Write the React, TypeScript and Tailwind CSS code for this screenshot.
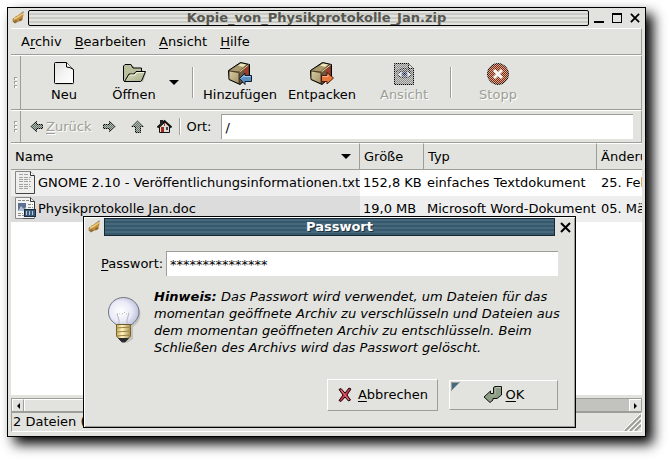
import React from "react";

type IconProps = { className?: string };

function SharedPaints() {
  return (
    <svg className="absolute size-0" aria-hidden="true">
      <defs>
        <pattern id="dither" width="2" height="2" patternUnits="userSpaceOnUse">
          <rect width="1" height="1" fill="#e2e3de" />
          <rect x="1" y="1" width="1" height="1" fill="#e2e3de" />
        </pattern>
        <linearGradient id="paper" x1="0" y1="0" x2="1" y2="1">
          <stop offset="0" stopColor="#dfe0de" />
          <stop offset="0.5" stopColor="#f4f4f3" />
          <stop offset="1" stopColor="#ffffff" />
        </linearGradient>
        <linearGradient id="folder" x1="0" y1="0" x2="1" y2="1">
          <stop offset="0" stopColor="#dfe3c6" />
          <stop offset="1" stopColor="#a3aa84" />
        </linearGradient>
        <linearGradient id="boxFront" x1="0" y1="0" x2="1" y2="1">
          <stop offset="0" stopColor="#d6cba0" />
          <stop offset="1" stopColor="#a3936a" />
        </linearGradient>
        <radialGradient id="glass" cx="0.4" cy="0.5" r="0.6">
          <stop offset="0" stopColor="#ffffff" />
          <stop offset="0.6" stopColor="#e9eaf6" />
          <stop offset="1" stopColor="#bcc0dc" />
        </radialGradient>
        <linearGradient id="brass" x1="0" y1="0" x2="1" y2="0">
          <stop offset="0" stopColor="#c9ad5c" />
          <stop offset="0.4" stopColor="#fff6c4" />
          <stop offset="1" stopColor="#a8924b" />
        </linearGradient>
      </defs>
    </svg>
  );
}

function RollerIcon({ className }: IconProps) {
  return (
    <svg viewBox="0 0 14 14" className={className} aria-hidden="true">
      <path d="M2 8L5 5L7 4.500L9 2.500L12 1.500L12.500 4L11.500 8L8 10.500L4 11.500L1.500 11Z" fill="#c08d3c" />
      <path d="M3 8L7 6L10 4L12 2.500" stroke="#eccb82" strokeWidth="1.500" fill="none" />
      <path d="M2 10.500L5 9L7 10.500L4 12.500Z" fill="#8d7040" />
      <path d="M8 8.500L11 7L11.500 9L8.500 10.500Z" fill="#94642a" />
      <path d="M1.500 8.500L3 7.500M10.500 1.500L13 1" stroke="#808287" />
    </svg>
  );
}

function NewIcon({ className }: IconProps) {
  return (
    <svg viewBox="0 0 24 24" className={className} aria-hidden="true">
      <path d="M3.500 1.500H15.500L22 8V22.500H3.500Z" fill="#b9bab6" />
      <path d="M2.500 1.500Q2.500 .5 3.500 .5H14.500L21.500 7.500V20.500Q21.500 21.500 20.500 21.500H3.500Q2.500 21.500 2.500 20.500Z" fill="url(#paper)" stroke="#000" />
      <path d="M14.500 .5V5Q18 5 21.500 7.500" fill="#fff" stroke="#000" />
    </svg>
  );
}

function FolderIcon({ className }: IconProps) {
  return (
    <svg viewBox="0 0 24 24" className={className} aria-hidden="true">
      <path d="M2 4h10v4h9v3h3l-3 9H3z" fill="#babbb6" />
      <path d="M1.500 18V4L3 2.500H9L11 6H19.500V9.500" fill="#b9bf9d" stroke="#000" />
      <path d="M2.500 19.500L7 12H12L14 9.500H23.500L20 18L18.500 19.500Z" fill="url(#folder)" stroke="#000" />
      <path d="M8 13h5l2-2.500h7" stroke="#f1f3df" fill="none" />
      <path d="M1.500 17V18.500L3 19.500" stroke="#000" fill="none" />
    </svg>
  );
}

function BoxBody() {
  return (
    <>
      <path d="M.5 8.500L12.500 .5L21.500 2.500V14L12 22.500L1 17.500Z" fill="#4d3d26" stroke="#000" />
      <path d="M1.500 8.500L12.500 1.500L19 2.500L11 9.500Z" fill="#a89a6c" />
      <path d="M10 3.500L13 1.500L18 2.500L15 5Z" fill="#efe5bb" />
      <path d="M1.500 9.500L10.500 11V21L1.500 17Z" fill="url(#boxFront)" />
      <path d="M12 10.500L20.500 3.500V14L12 21Z" fill="#9d3d2a" />
      <path d="M12 10.500L16 7.500V17L12 21Z" fill="#69583b" />
      <path d="M11.500 10L20.500 3" stroke="#ecdcae" />
    </>
  );
}

function AddIcon({ className }: IconProps) {
  return (
    <svg viewBox="0 0 24 24" className={className} aria-hidden="true">
      <BoxBody />
      <path d="M11.500 16.500L17 11V13.500H23.500V19.500H17V22.500Z" fill="#5b8fc0" stroke="#0b1b33" />
      <path d="M13 16.500L16 13.500V14.500H22.500" stroke="#a9cae6" fill="none" />
    </svg>
  );
}

function ExtractIcon({ className }: IconProps) {
  return (
    <svg viewBox="0 0 24 24" className={className} aria-hidden="true">
      <BoxBody />
      <path d="M11.500 13.500H17V10.500L23.500 16L17 22V19.500H11.500Z" fill="#e8783c" stroke="#47180a" />
      <path d="M12.500 14.500H18V12.500" stroke="#f8b58d" fill="none" />
    </svg>
  );
}

function ViewIcon({ className }: IconProps) {
  return (
    <svg viewBox="0 0 24 24" className={className} aria-hidden="true">
      <path d="M2.500 1.500H16.500L21.500 6.500V22.500H2.500Z" fill="#8d8e8b" stroke="#000" />
      <path d="M16.500 1.500V6.500H21.500" fill="#ddd" stroke="#000" />
      <path d="M4.500 12.500Q12 5 20.500 12.500Q12 19 4.500 12.500Z" fill="#e8e8ec" stroke="#222" />
      <path d="M4 10Q12 3 20 10" stroke="#222" fill="none" />
      <circle cx="12.500" cy="12" r="3" fill="#44547c" />
      <circle cx="12.500" cy="12" r="1" fill="#000" />
      <rect width="24" height="24" fill="url(#dither)" opacity="0.75" shapeRendering="crispEdges" />
    </svg>
  );
}

function StopIcon({ className }: IconProps) {
  return (
    <svg viewBox="0 0 24 24" className={className} aria-hidden="true">
      <circle cx="12" cy="12" r="10.500" fill="#8c2706" stroke="#000" />
      <rect width="24" height="24" fill="url(#dither)" opacity="0.7" shapeRendering="crispEdges" />
      <path d="M8 8L16 16M16 8L8 16" stroke="#f4f4f2" strokeWidth="3" />
    </svg>
  );
}

function ArrowIcon({ className, d }: IconProps & { d: string }) {
  return (
    <svg viewBox="0 0 15 15" className={className} aria-hidden="true">
      <path d={d} fill="#5f7364" stroke="#000" />
      <rect width="15" height="15" fill="url(#dither)" opacity="0.65" shapeRendering="crispEdges" />
    </svg>
  );
}

function HomeIcon({ className }: IconProps) {
  return (
    <svg viewBox="0 0 15 15" className={className} aria-hidden="true">
      <path d="M2.500 8V13.500H12.500V7L8 3Z" fill="#dcdcd6" stroke="#111" />
      <path d="M.5 8.500L7.500 2L14.500 8.500" stroke="#111" strokeWidth="2" fill="none" />
      <path d="M3 1h3v4l-3 3z" fill="#222" />
      <rect x="4" y="8" width="3" height="5" fill="#a52a1c" />
      <rect x="9" y="8" width="2" height="3" fill="#3f4a58" />
      <path d="M7.500 4V7" stroke="#b03a26" />
    </svg>
  );
}

function TextFileIcon({ className }: IconProps) {
  return (
    <svg viewBox="0 0 24 24" className={className} aria-hidden="true">
      <path d="M2.500 .5H17.500L21.500 4.500V22.500H2.500Z" fill="#efefee" stroke="#858585" />
      <path d="M21.500 5V22.500H3" stroke="#444" fill="none" />
      <path d="M17.500 .5V4.500H21.500" fill="#fff" stroke="#333" />
      <path d="M6 3.500h9M6 6.500h12M6 8.500h11M6 10.500h12M6 13.500h11M6 15.500h12M6 17.500h10" stroke="#a3a4a2" strokeDasharray="4 1" />
    </svg>
  );
}

function DocFileIcon({ className }: IconProps) {
  return (
    <svg viewBox="0 0 24 24" className={className} aria-hidden="true">
      <path d="M2.500 .5H17.500L21.500 4.500V21.500H2.500Z" fill="#f3f3f3" stroke="#888" />
      <path d="M17.500 .5V4.500H21.500V12" fill="#fff" stroke="#333" />
      <path d="M5 3.500h11M15 7.500h5M15 10.500h5M5 16.500h5M5 18.500h6" stroke="#888" strokeDasharray="3 1" />
      <rect x="5" y="6" width="8" height="8" fill="#5e6f94" />
      <path d="M5 14l3-5 3 3 2-2v4z" fill="#b3bfd0" />
      <rect x="11.500" y="12.500" width="11" height="7" fill="#3c5b7c" stroke="#182a3d" />
      <path d="M13.500 14v4M16.500 14v4M19.500 14v4" stroke="#b7c8da" />
      <path d="M10 21.500h11" stroke="#555" />
    </svg>
  );
}

function BulbIcon({ className }: IconProps) {
  return (
    <svg viewBox="0 0 36 48" className={className} aria-hidden="true">
      <path d="M18 3C27 3 34.500 10 34.500 18C34.500 24 31 28 27 31V43L21 47L14 43V30C8 27 5 23 5 18" fill="#c3c4c0" />
      <path d="M17.500 1.500C26 1.500 33 8 33 16C33 22 29 26 25 29H11C6 26 2.500 22 2.500 16C2.500 8 9 1.500 17.500 1.500Z" fill="url(#glass)" stroke="#707381" />
      <path d="M13 28V24L11 18L14 17L16 18L18 16L20 18L23 17L21 24V28" stroke="#b5b8c0" fill="none" />
      <path d="M12 18l2-2 1 2 2-2 2 2 2-2 1 2" stroke="#fff" fill="none" />
      <path d="M10.500 28.500H24.500V40L20 45H15L10.500 40Z" fill="url(#brass)" stroke="#6c5b2b" />
      <path d="M10 32L25 31M10 36L25 35M10 40L25 39" stroke="#9a8040" />
      <path d="M12 42H23L19 46.500H16Z" fill="#292a2d" />
    </svg>
  );
}

function CancelIcon({ className }: IconProps) {
  return (
    <svg viewBox="0 0 16 16" className={className} aria-hidden="true">
      <path d="M2 2.500L4 1.500L8 6L12 1L14 2L10 8L13.500 13L11.500 14L8 10L4 14.500L2 13.500L6 8Z" fill="#c43648" stroke="#1d0508" />
      <path d="M4 3L12 13" stroke="#e27684" />
    </svg>
  );
}

function OkIcon({ className }: IconProps) {
  return (
    <svg viewBox="0 0 20 20" className={className} aria-hidden="true">
      <path d="M10.500 2.500L12 1.500H18.500V10L14 13.500H10V15L7 17.500L1 12L7.500 6V8.500H10.500Z" fill="#8d9d85" stroke="#111" />
      <path d="M12.500 3V9.500L10 11H7.500" stroke="#a4b19b" fill="none" />
      <path d="M13 2.500h5" stroke="#bcc7b4" />
    </svg>
  );
}

function CloseIcon({ className }: IconProps) {
  return (
    <svg viewBox="0 0 11 11" className={className} aria-hidden="true">
      <path d="M1 1L10 10M10 1L1 10" stroke="#000" strokeWidth="2" />
    </svg>
  );
}

function Grip() {
  return (
    <div className="flex w-[10px] shrink-0 flex-col items-center justify-center gap-[1px] self-stretch border-r border-[#9d9e97]">
      <i className="size-[3px] border-t border-l border-[#9d9e97] bg-white" />
      <i className="size-[3px] border-t border-l border-[#9d9e97] bg-white" />
      <i className="size-[3px] border-t border-l border-[#9d9e97] bg-white" />
    </div>
  );
}

function Separator({ className }: IconProps) {
  return <div className={`w-[2px] shrink-0 border-l border-[#9d9e97] bg-white ${className}`} />;
}

type ToolProps = { label: string; icon: React.ReactNode; width: string; disabled?: boolean };

function Tool({ label, icon, width, disabled }: ToolProps) {
  return (
    <button
      disabled={disabled}
      className={`flex shrink-0 flex-col items-center gap-[1px] ${width} disabled:text-[#9d9e97] disabled:[text-shadow:1px_1px_0_#fff]`}
    >
      {icon}
      {label}
    </button>
  );
}

const menus = [
  ["A", "r", "chiv"],
  ["", "B", "earbeiten"],
  ["", "A", "nsicht"],
  ["", "H", "ilfe"],
];

const files = [
  {
    name: "GNOME 2.10 - Veröffentlichungsinformationen.txt",
    icon: <TextFileIcon className="size-6 shrink-0" />,
    size: "152,8 KB",
    type: "einfaches Textdokument",
    date: "25. Feb",
    row: "bg-white",
    first: "bg-[#eeeeee]",
  },
  {
    name: "Physikprotokolle Jan.doc",
    icon: <DocFileIcon className="size-6 shrink-0" />,
    size: "19,0 MB",
    type: "Microsoft Word-Dokument",
    date: "05. Mä",
    row: "bg-[#eeeeee]",
    first: "bg-[#dcdcdc]",
  },
];

const headCell = "border-t border-r border-b border-t-white border-r-[#9d9e97] border-b-[#9d9e97] px-1 text-left font-normal";

function PasswordDialog() {
  return (
    <section
      role="dialog"
      aria-labelledby="dialog-title"
      className="absolute top-[208px] right-[69px] left-[75px] border border-black bg-[#e2e3de] pb-4 shadow-[inset_1px_1px_0_#fff,inset_-1px_-1px_0_#9d9e97]"
    >
      <header className="flex h-5 items-center gap-[3px] px-[3px]">
        <RollerIcon className="size-[14px] shrink-0" />
        <h2
          id="dialog-title"
          className="h-[18px] flex-1 border border-[#152a35] bg-[repeating-linear-gradient(#47697d_0_2px,#38596c_2px_4px)] pl-5 text-center leading-4 font-bold text-white [text-shadow:1px_1px_0_#1c323e]"
        >
          Passwort
        </h2>
        <button aria-label="Schließen" className="flex w-[14px] shrink-0 justify-center">
          <CloseIcon className="size-[11px]" />
        </button>
      </header>
      <div className="mt-[14px] flex items-center gap-1 px-[17px]">
        <label htmlFor="password" className="w-[61px] whitespace-nowrap">
          <u>P</u>asswort:
        </label>
        <input
          id="password"
          defaultValue="***************"
          className="h-[25px] min-w-0 flex-1 border-t border-l border-[#9d9e97] bg-white px-[3px] outline-none"
        />
      </div>
      <div className="mt-3 flex gap-3 pr-2 pl-[22px]">
        <BulbIcon className="mt-2 h-12 w-9 shrink-0" />
        <p className="leading-[17px] italic">
          <strong>Hinweis:</strong> Das Passwort wird verwendet, um Dateien für das momentan geöffnete Archiv zu
          verschlüsseln und Dateien aus dem momentan geöffneten Archiv zu entschlüsseln. Beim Schließen des Archivs
          wird das Passwort gelöscht.
        </p>
      </div>
      <footer className="mt-[23px] flex items-center justify-end gap-[11px] pr-[17px]">
        <button className="flex h-8 w-[111px] items-center justify-center gap-[5px] border border-t-white border-r-[#9d9e97] border-b-[#9d9e97] border-l-white">
          <CancelIcon className="size-4" />
          <span>
            <u>A</u>bbrechen
          </span>
        </button>
        <button className="relative flex h-[30px] w-[109px] items-center justify-center gap-[3px] border border-t-white border-r-[#9d9e97] border-b-[#9d9e97] border-l-white">
          <svg viewBox="0 0 9 9" className="absolute top-[1px] left-[1px] size-[9px]" aria-hidden="true">
            <path d="M0 0H9L0 9Z" fill="#47697d" />
            <path d="M0 .5H9M.5 0V9" stroke="#9d9e97" />
          </svg>
          <OkIcon className="size-5" />
          <span>
            <u>O</u>K
          </span>
        </button>
      </footer>
    </section>
  );
}

export default function App() {
  return (
    <main className="flex min-h-screen bg-white pt-[7px] pr-[23px] pb-[23px] pl-[7px] font-['DejaVu_Sans',sans-serif] text-[13px] leading-4 text-black [&_u]:underline-offset-2">
      <SharedPaints />
      <div className="relative flex min-w-0 flex-1 flex-col border border-black bg-[#e2e3de] px-[3px] pb-1 shadow-[7px_7px_12px_#000]">
        <header className="flex h-5 shrink-0 items-center">
          <RollerIcon className="size-[14px] shrink-0" />
          <h1 className="ml-[3px] h-4 min-w-0 flex-1 overflow-hidden rounded-[2px] border border-black bg-[repeating-linear-gradient(#e2e3de_0_2px,#c9cac5_2px_4px)] pl-4 text-center leading-[14px] font-bold text-[#555650]">
            Kopie_von_Physikprotokolle_Jan.zip
          </h1>
          <div className="flex shrink-0 items-center gap-2 pr-[2px] pl-[5px]">
            <button aria-label="Minimieren" className="flex h-[10px] w-[10px] items-end">
              <i className="h-[2px] w-full bg-black" />
            </button>
            <button aria-label="Maximieren" className="h-[10px] w-[10px] border border-t-2 border-black" />
            <button aria-label="Fenster schließen">
              <CloseIcon className="size-[10px]" />
            </button>
          </div>
        </header>

        <nav className="flex h-[27px] shrink-0 items-center gap-[13px] border-t border-r border-b border-t-white border-r-[#9d9e97] border-b-[#9d9e97] pl-[10px]">
          {menus.map(([before, key, after]) => (
            <button key={after}>
              {before}
              <u>{key}</u>
              {after}
            </button>
          ))}
        </nav>

        <div className="flex h-[55px] shrink-0 items-center border-t border-r border-b border-t-white border-r-[#9d9e97] border-b-[#9d9e97]">
          <Grip />
          <div className="flex items-center pl-2">
            <Tool label="Neu" width="w-[70px]" icon={<NewIcon className="size-6" />} />
            <Tool label="Öffnen" width="w-[70px]" icon={<FolderIcon className="size-6" />} />
            <button aria-label="Zuletzt geöffnet" className="flex w-[10px] justify-center">
              <i className="border-x-[5px] border-t-[5px] border-x-transparent border-t-black" />
            </button>
            <Separator className="mr-[5px] ml-[13px] h-[31px]" />
            <Tool label="Hinzufügen" width="w-[82px]" icon={<AddIcon className="size-6" />} />
            <Tool label="Entpacken" width="w-[82px]" icon={<ExtractIcon className="size-6" />} />
            <Tool label="Ansicht" width="w-[82px]" icon={<ViewIcon className="size-6" />} disabled />
            <Separator className="mr-[5px] ml-[5px] h-[31px]" />
            <Tool label="Stopp" width="w-[82px]" icon={<StopIcon className="size-6" />} disabled />
          </div>
        </div>

        <div className="flex h-[33px] shrink-0 items-center border-t border-r border-b border-t-white border-r-[#9d9e97] border-b-[#9d9e97] pr-2">
          <Grip />
          <button disabled className="ml-2 flex items-center gap-[2px] text-[#9d9e97] [text-shadow:1px_1px_0_#fff]">
            <ArrowIcon className="size-[15px]" d="M1.500 7.500L7.500 2.500V5.500H13.500V9.500H7.500V12.500Z" />
            <span className="leading-[15px]">
              <u>Z</u>urück
            </span>
          </button>
          <div className="flex w-[81px] items-center justify-between pl-[11px]">
            <button disabled aria-label="Vor">
              <ArrowIcon className="size-[15px]" d="M13.500 7.500L7.500 2.500V5.500H1.500V9.500H7.500V12.500Z" />
            </button>
            <button disabled aria-label="Aufwärts">
              <ArrowIcon className="size-[15px]" d="M7.500 1.500L13.500 7.500H10.500V13.500H5.500V7.500H1.500Z" />
            </button>
            <button aria-label="Persönlicher Ordner">
              <HomeIcon className="size-[15px]" />
            </button>
          </div>
          <Separator className="mr-[5px] ml-[7px] h-[17px]" />
          <label htmlFor="location" className="w-[35px] shrink-0">
            Ort:
          </label>
          <input
            id="location"
            defaultValue="/"
            className="h-[25px] min-w-0 flex-1 border-t border-l border-[#9d9e97] bg-white px-[3px] outline-none"
          />
        </div>

        <div className="min-h-0 flex-1 overflow-hidden bg-white">
          <table className="w-full table-fixed border-separate border-spacing-0 whitespace-nowrap">
            <colgroup>
              <col />
              <col className="w-[64px]" />
              <col className="w-[173px]" />
              <col className="w-[45px]" />
            </colgroup>
            <thead className="bg-[#e2e3de]">
              <tr className="h-[27px]">
                <th className={headCell}>
                  <div className="flex items-center justify-between pr-1">
                    Name
                    <i className="border-x-[5px] border-t-[5px] border-x-transparent border-t-black" />
                  </div>
                </th>
                <th className={headCell}>Größe</th>
                <th className={headCell}>Typ</th>
                <th className="overflow-hidden border-t border-b border-t-white border-b-[#9d9e97] pl-1 text-left font-normal">
                  Änderu
                </th>
              </tr>
            </thead>
            <tbody>
              {files.map((file) => (
                <tr key={file.name} className={`h-[26px] ${file.row}`}>
                  <td className={`overflow-hidden p-0 pl-[2px] ${file.first}`}>
                    <div className="flex items-center gap-[1px]">
                      {file.icon}
                      {file.name}
                    </div>
                  </td>
                  <td className="p-0 pl-[3px]">{file.size}</td>
                  <td className="p-0 pl-[3px]">{file.type}</td>
                  <td className="overflow-hidden p-0 pl-1">{file.date}</td>
                </tr>
              ))}
            </tbody>
          </table>
        </div>

        <div className="mt-[3px] flex h-[14px] shrink-0 border border-[#9d9e97] bg-[#c2c3be]">
          <button
            aria-label="Nach links"
            className="flex w-3 items-center justify-center border-t border-r border-l border-t-white border-r-[#9d9e97] border-l-white bg-[#e2e3de]"
          >
            <i className="border-y-[3px] border-r-[3px] border-y-transparent border-r-black" />
          </button>
          <div className="w-3/5 border-t border-r border-l border-t-white border-r-[#9d9e97] border-l-white bg-[#e2e3de]" />
          <button
            aria-label="Nach rechts"
            className="ml-auto flex w-3 items-center justify-center border-t border-l border-white bg-[#e2e3de]"
          >
            <i className="border-y-[3px] border-l-[3px] border-y-transparent border-l-black" />
          </button>
        </div>

        <footer className="flex h-5 shrink-0 items-end justify-between border border-t-[#9d9e97] border-r-white border-b-white border-l-[#9d9e97] pl-[1px]">
          <span className="self-center">2 Dateien (</span>
          <svg viewBox="0 0 17 17" className="size-[17px]" aria-hidden="true">
            <path d="M1 17L17 1M6 17L17 6M11 17L17 11" stroke="#9d9e97" strokeWidth="2" />
            <path d="M0 16L16 0M4 17L17 4M9 17L17 9" stroke="#fff" />
          </svg>
        </footer>

        <PasswordDialog />
      </div>
    </main>
  );
}
